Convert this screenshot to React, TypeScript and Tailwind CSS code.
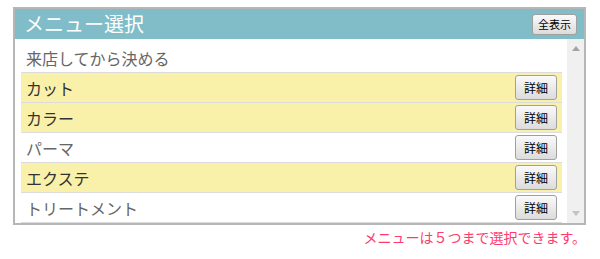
export default function App() {
  const menus = [
    { name: "来店してから決める", selected: false, detail: false },
    { name: "カット", selected: true, detail: true },
    { name: "カラー", selected: true, detail: true },
    { name: "パーマ", selected: false, detail: true },
    { name: "エクステ", selected: true, detail: true },
    { name: "トリートメント", selected: false, detail: true },
  ]

  const btn =
    "rounded-[3px] border border-[#a0a0a0] bg-gradient-to-b from-[#fafafa] to-[#dcdcdc] text-black leading-none"

  return (
    <div
      className="w-[600px] h-[259px] bg-white pt-[7px] pl-[13px]"
      style={{ fontFamily: '"Noto Sans CJK JP", "Noto Sans", sans-serif' }}
    >
      <div className="w-[573px]">
        <div className="border-2 border-[#b6b6b6]">
          {/* Header */}
          <div className="h-[30px] bg-[#80bdc8] flex items-center justify-between pl-[9px] pr-[7px]">
            <span className="text-white text-[20px] leading-none">メニュー選択</span>
            <button className={`${btn} w-[45px] h-[21px] text-[11px]`}>全表示</button>
          </div>

          {/* List */}
          <div className="flex h-[184px]">
            <div className="flex-1 pl-[6px] pr-[5px] pt-[4px]">
              {menus.map((m) => (
                <div
                  key={m.name}
                  className={`h-[30px] border-b border-[#dcdcdc] flex items-center justify-between pl-[5px] pr-[5px] ${
                    m.selected ? "bg-[#f9f0a9] text-[#333]" : "bg-white text-[#666]"
                  }`}
                >
                  <span className="text-[16px] leading-none">{m.name}</span>
                  {m.detail && (
                    <button className={`${btn} w-[42px] h-[25px] text-[12px]`}>詳細</button>
                  )}
                </div>
              ))}
            </div>
            {/* Scrollbar */}
            <div className="w-[17px] bg-[#f0f0f0] flex flex-col items-center justify-between py-[7px]">
              <svg width="8" height="5" viewBox="0 0 8 5">
                <polygon points="4,0 8,5 0,5" fill="#a3a3a3" />
              </svg>
              <svg width="8" height="5" viewBox="0 0 8 5">
                <polygon points="0,0 8,0 4,5" fill="#c2c2c2" />
              </svg>
            </div>
          </div>
        </div>
        <p className="text-right text-[14px] text-[#ff3a6e] mt-[2px] leading-[20px]">
          メニューは５つまで選択できます。
        </p>
      </div>
    </div>
  )
}
